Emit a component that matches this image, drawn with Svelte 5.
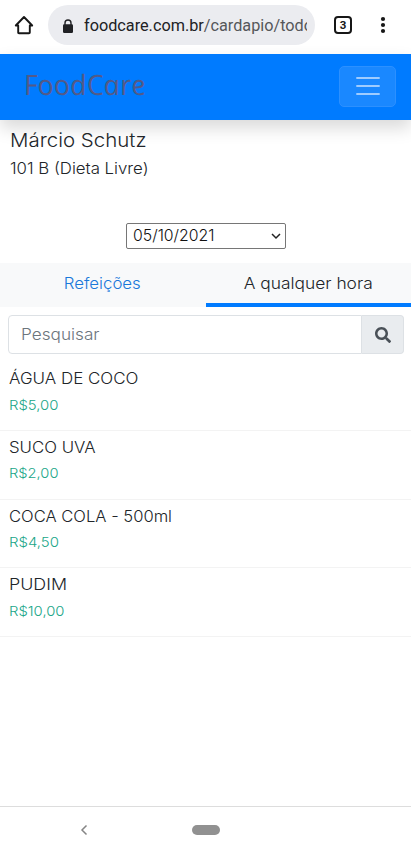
<script>
  const items = [
    { name: 'ÁGUA DE COCO', price: 'R$5,00', nameWidth: 129.5, priceWidth: 49.5 },
    { name: 'SUCO UVA', price: 'R$2,00', nameWidth: 86.5, priceWidth: 49.5 },
    { name: 'COCA COLA - 500ml', price: 'R$4,50', nameWidth: 163, priceWidth: 50 },
    { name: 'PUDIM', price: 'R$10,00', nameWidth: 58, priceWidth: 55.5 }
  ];

  // Stretches a label's glyphs horizontally to a given width.
  function fit(node, width) {
    const skew = node.dataset.skew ? ` skewX(${node.dataset.skew}deg)` : '';
    node.style.transform = `scaleX(${width / node.getBoundingClientRect().width})${skew}`;
  }
</script>

<div class="screen">
  <header class="browser">
    <svg class="home" width="20" height="20" viewBox="0 0 20 20" fill="none" stroke="#171717" stroke-width="1.9" stroke-linejoin="round" stroke-linecap="round">
      <path d="M1.800 10.500 10 2l8.200 8.500H15.800v7q0 .8-.8.8H5q-.8 0-.8-.8v-7z" />
    </svg>
    <div class="address">
      <svg width="12" height="15" viewBox="0 0 12 15"><path d="M3 6V4a3 3 0 0 1 6 0v2" fill="none" stroke="#202124" stroke-width="1.4"/><rect x="1" y="5.2" width="10" height="8.8" rx="1.2" fill="#202124"/></svg>
      <div class="url"><span class="fit" use:fit={229}>foodcare.com.br<i>/cardapio/todo</i></span></div>
    </div>
    <div class="tabcount">3</div>
    <svg class="dots" width="6" height="18" viewBox="0 0 6 18" fill="#171717"><circle cx="3" cy="3" r="2.100"/><circle cx="3" cy="9" r="2.100"/><circle cx="3" cy="15" r="2.100"/></svg>
  </header>

  <nav class="navbar">
    <span class="brand fit" data-skew="11" use:fit={122}>FoodCare</span>
    <button class="toggler" aria-label="Menu">
      <svg width="26" height="20" viewBox="0 0 26 20" stroke="#9fccff" stroke-width="1.9" stroke-linecap="round"><path d="M2 2h22M2 10h22M2 18h22" /></svg>
    </button>
  </nav>

  <section class="patient">
    <div class="person"><span class="fit" use:fit={136.5}>Márcio Schutz</span></div>
    <div class="room"><span class="fit" use:fit={138.5}>101 B (Dieta Livre)</span></div>
  </section>

  <div class="date">
    <span class="fit" use:fit={81.5}>05/10/2021</span>
    <svg width="10" height="7" viewBox="0 0 10 7" fill="none" stroke="#222" stroke-width="1.5"><path d="m1 1 4 4 4-4" /></svg>
  </div>

  <div class="tabs">
    <div class="tab link"><span class="mid" use:fit={77}>Refeições</span></div>
    <div class="tab active"><span class="mid" use:fit={129}>A qualquer hora</span></div>
  </div>

  <div class="search">
    <div class="field"><span class="fit" use:fit={78.5}>Pesquisar</span></div>
    <div class="go">
      <svg width="16" height="16" viewBox="0 0 512 512" fill="#495057"><path d="M505 442.700 405.300 343c-4.500-4.500-10.600-7-17-7H372c27.600-35.300 44-79.700 44-128C416 93.100 322.900 0 208 0S0 93.100 0 208s93.100 208 208 208c48.300 0 92.700-16.400 128-44v16.300c0 6.400 2.500 12.500 7 17l99.700 99.700c9.400 9.400 24.600 9.400 33.900 0l28.300-28.300c9.400-9.400 9.400-24.600.1-34zM208 336c-70.700 0-128-57.200-128-128 0-70.700 57.200-128 128-128 70.700 0 128 57.200 128 128 0 70.700-57.200 128-128 128z"/></svg>
    </div>
  </div>

  <div class="list">
    {#each items as item}
      <div class="item">
        <div class="name"><span class="fit" use:fit={item.nameWidth}>{item.name}</span></div>
        <div class="price"><span class="fit" use:fit={item.priceWidth}>{item.price}</span></div>
      </div>
    {/each}
  </div>

  <footer class="system">
    <svg class="back" width="8" height="12" viewBox="0 0 8 12" fill="none" stroke="#858585" stroke-width="1.5"><path d="M6.500 1.500 2 6l4.500 4.500" /></svg>
    <div class="pill"></div>
  </footer>
</div>

<style>
  .screen {
    width: 411px;
    height: 854px;
    display: flex;
    flex-direction: column;
    background: #fff;
    overflow: hidden;
    color: #212529;
    font: 350 15.4px/24px Inter, sans-serif;
  }
  .screen * { box-sizing: border-box; }
  .fit, .mid { display: inline-block; white-space: nowrap; transform-origin: left center; }
  .mid { transform-origin: center; }

  .browser { height: 54px; flex: none; display: flex; align-items: center; padding-bottom: 4px; }
  .home { margin-left: 14px; }
  .address {
    width: 267px;
    height: 40px;
    margin-left: 14px;
    padding: 2px 8px 0 14px;
    border-radius: 20px;
    background: #ebecf0;
    display: flex;
    align-items: center;
  }
  .url { width: 223px; margin-left: 10px; overflow: hidden; font: 16px/24px Roboto, sans-serif; color: #202124; }
  .url i { font-style: normal; color: #55575a; }
  .tabcount {
    width: 18px;
    height: 18px;
    margin-left: 19px;
    border: 2px solid #171717;
    border-radius: 4px;
    font: bold 11.5px/14px Roboto, sans-serif;
    text-align: center;
    color: #171717;
  }
  .dots { margin-left: 28px; }

  .navbar {
    height: 66px;
    flex: none;
    display: flex;
    align-items: center;
    justify-content: space-between;
    padding: 0 15px 0 23px;
    background: #007bff;
    box-shadow: 0 8px 16px rgba(0, 0, 0, 0.15);
    position: relative;
  }
  .brand { font: italic 28px/38px "Open Sans", sans-serif; color: #535a88; margin-top: -6px; }
  .toggler {
    width: 57px;
    height: 41px;
    margin-top: -2px;
    padding: 0;
    display: flex;
    align-items: center;
    justify-content: center;
    border: 1px solid #2c90ff;
    border-radius: 5px;
    background: #1a88ff;
  }

  .patient { padding: 7px 10px 0; height: 103px; flex: none; }
  .person { font-size: 18.6px; line-height: 26px; }
  .room { line-height: 24px; margin-top: 4px; }

  .date {
    width: 160px;
    height: 26px;
    flex: none;
    margin-left: 126px;
    padding: 0 4px 0 6px;
    border: 1px solid #767676;
    border-radius: 2px;
    display: flex;
    align-items: center;
    justify-content: space-between;
    color: #111;
  }

  .tabs { height: 44px; flex: none; margin-top: 14px; display: flex; background: #f8f9fa; }
  .tab { flex: 1; padding-top: 8px; text-align: center; }
  .tab span { margin-top: 1px; }
  .link { color: #1978da; }
  .active { border-bottom: 4px solid #007bff; }

  .search { display: flex; height: 39px; flex: none; margin: 8px 7px 0 8px; }
  .field {
    flex: 1;
    padding: 7px 0 0 12px;
    border: 1px solid #dde1e5;
    border-radius: 4px 0 0 4px;
    color: #6c757d;
  }
  .go {
    width: 42px;
    display: flex;
    align-items: center;
    justify-content: center;
    background: #e9ecef;
    border: 1px solid #dde1e5;
    border-left: 0;
    border-radius: 0 4px 4px 0;
  }

  .list { flex: 1; padding-top: 8px; }
  .item { height: 68.8px; padding: 5px 9px 0; border-bottom: 1px solid #f3f3f3; }
  .price { font-size: 13.5px; line-height: 20px; margin-top: 3.600px; color: #20a688; }

  .system { height: 48px; flex: none; display: flex; align-items: center; border-top: 1px solid #ddd; padding-bottom: 1px; }
  .back { margin-left: 80px; }
  .pill { width: 28px; height: 10px; margin-left: 104px; border-radius: 5px; background: #919191; }
</style>
